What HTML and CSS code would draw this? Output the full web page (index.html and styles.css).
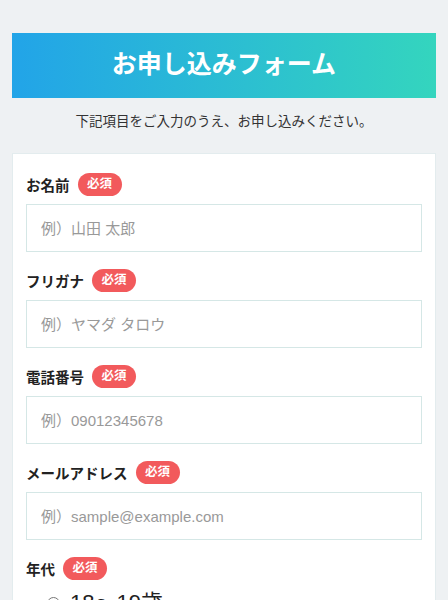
FILE: index.html
```html
<!DOCTYPE html>
<html lang="ja">
<head>
  <meta charset="UTF-8">
  <meta name="viewport" content="width=device-width, initial-scale=1.0">
  <title>お申し込みフォーム</title>
  <link rel="stylesheet" href="styles.css">
</head>
<body>
  <div class="page">
    <h1 class="title">お申し込みフォーム</h1>
    <p class="lead">下記項目をご入力のうえ、お申し込みください。</p>

    <form class="card">
      <div class="form-group">
        <div class="label-row">
          <label for="name">お名前</label>
          <span class="required">必須</span>
        </div>
        <input type="text" id="name" placeholder="例）山田 太郎">
      </div>

      <div class="form-group">
        <div class="label-row">
          <label for="kana">フリガナ</label>
          <span class="required">必須</span>
        </div>
        <input type="text" id="kana" placeholder="例）ヤマダ タロウ">
      </div>

      <div class="form-group">
        <div class="label-row">
          <label for="tel">電話番号</label>
          <span class="required">必須</span>
        </div>
        <input type="text" id="tel" placeholder="例）09012345678">
      </div>

      <div class="form-group">
        <div class="label-row">
          <label for="email">メールアドレス</label>
          <span class="required">必須</span>
        </div>
        <input type="text" id="email" placeholder="例）sample@example.com">
      </div>

      <div class="form-group">
        <div class="label-row">
          <label>年代</label>
          <span class="required">必須</span>
        </div>
        <label class="radio"><input type="radio" name="age"> 18〜19歳</label>
      </div>
    </form>
  </div>
</body>
</html>
```

FILE: styles.css
```css
body {
  font-family: "Liberation Sans", "Noto Sans CJK JP", sans-serif;
  background-color: #eef1f3;
  margin: 0;
  color: #222;
}

.page {
  padding: 33px 12px 0;
}

.title {
  margin: 0;
  height: 65px;
  line-height: 63px;
  text-align: center;
  font-size: 25px;
  font-weight: bold;
  color: #fff;
  background: linear-gradient(90deg, #22a4e8, #34d5be);
}

.lead {
  margin: 0;
  padding: 12px 0 0;
  height: 43px;
  text-align: center;
  font-size: 13.5px;
  color: #333;
}

.card {
  background-color: #fff;
  border: 1px solid #e3ecee;
  padding: 19px 13px 0;
}

.form-group {
  margin-bottom: 17px;
}

.label-row {
  display: flex;
  align-items: center;
  gap: 8px;
  height: 23px;
  margin-bottom: 8px;
}

.label-row label {
  font-size: 14.5px;
  font-weight: bold;
  color: #222;
}

.required {
  display: inline-block;
  width: 44px;
  height: 23px;
  line-height: 23px;
  border-radius: 12px;
  background-color: #f25a5c;
  color: #fff;
  font-size: 12.5px;
  font-weight: bold;
  text-align: center;
}

input[type="text"] {
  display: block;
  box-sizing: border-box;
  width: 100%;
  height: 48px;
  padding: 0 14px;
  border: 1px solid #d5e7e6;
  border-radius: 0;
  font-family: inherit;
  font-size: 15px;
  color: #333;
}

input[type="text"]::placeholder {
  color: #999;
}

.radio {
  display: flex;
  align-items: center;
  gap: 10px;
  padding-left: 21px;
  line-height: 30px;
  font-size: 22px;
  color: #222;
}

.radio input {
  width: 13px;
  height: 13px;
  margin: 0;
}
```
